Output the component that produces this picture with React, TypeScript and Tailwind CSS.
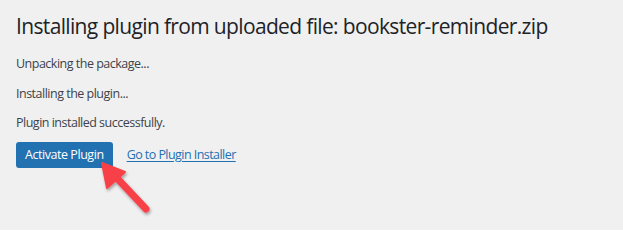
export default function App() {
  const steps = ["Unpacking the package...", "Installing the plugin...", "Plugin installed successfully."]

  return (
    <div
      className="relative min-h-[230px] w-full bg-[#f0f0f1] pl-[16px] pt-[11px] text-[#1d2327]"
      style={{ fontFamily: '"Open Sans", "Noto Sans", sans-serif' }}
    >
      <h1 className="text-[21px] leading-[30px] font-normal tracking-[-0.65px]">
        Installing plugin from uploaded file: bookster-reminder.zip
      </h1>

      <div className="mt-[13px] flex flex-col gap-[9.5px] text-[12.5px] leading-[20px] tracking-[-0.5px] text-[#3c434a]">
        {steps.map((s) => (
          <p key={s}>{s}</p>
        ))}
      </div>

      <div className="mt-[9px] flex items-center gap-[14px]">
        <button className="h-[26px] rounded-[3px] bg-[#2271b1] px-[9px] text-[12.5px] leading-[26px] tracking-[-0.45px] text-white">
          Activate Plugin
        </button>
        <a href="#" className="text-[12.5px] tracking-[-0.55px] text-[#2271b1] underline underline-offset-[2px]">
          Go to Plugin Installer
        </a>
      </div>

      {/* pointer arrow */}
      <svg className="absolute left-[95px] top-[156px]" width="64" height="64" viewBox="0 0 64 64">
        <defs>
          <filter id="sh" x="-30%" y="-30%" width="160%" height="160%">
            <feDropShadow dx="1" dy="2" stdDeviation="1.5" floodColor="#000" floodOpacity="0.35" />
          </filter>
        </defs>
        <g filter="url(#sh)">
          <line x1="20" y1="20" x2="51" y2="53" stroke="#f74146" strokeWidth="7" strokeLinecap="round" />
          <polygon points="7,7 12,32 30,16" fill="#f74146" stroke="#f74146" strokeWidth="2" strokeLinejoin="round" />
        </g>
      </svg>
    </div>
  )
}
